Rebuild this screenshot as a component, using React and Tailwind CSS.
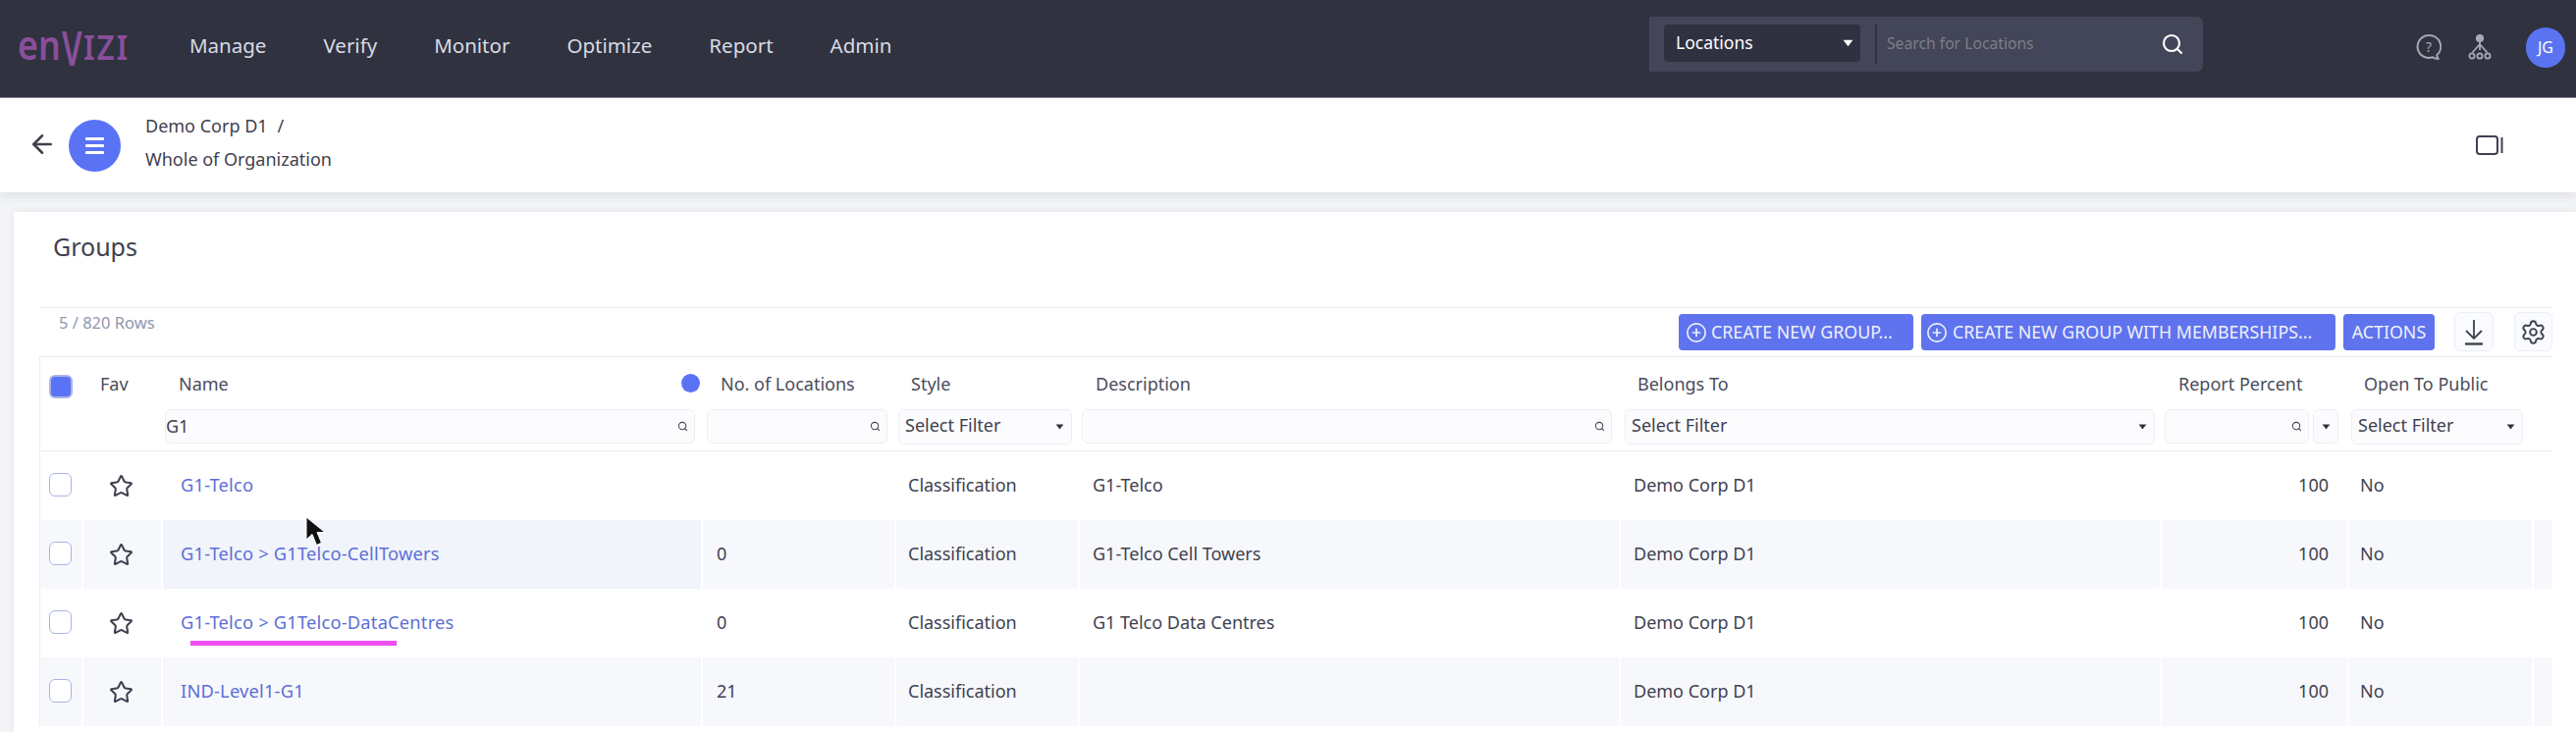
import React from "react";
import { ArrowLeft, Search, CirclePlus, Star, Settings } from "lucide-react";

const GRID = "grid grid-cols-[42px_81px_550px_197px_187px_551px_551px_191px_188px_22px]";

function Caret({ className = "" }) {
  return (
    <svg viewBox="0 0 10 7" className={"w-[9px] h-[6px] " + className}>
      <path d="M0.5 0.5H9.5L5 6.5Z" fill="currentColor" />
    </svg>
  );
}

function SearchFilter({ value = "", className = "" }) {
  return (
    <div className={"h-[35px] rounded-[6px] border border-[#eceef5] bg-[#fcfcfe] flex items-center justify-between pr-[6px] " + className}>
      <span className="text-[#3f4150] text-[18px] leading-[24px] -mt-[2px]">{value}</span>
      <Search size={11} strokeWidth={2.2} className="text-[#3f4150]" />
    </div>
  );
}

function SelectFilter({ className = "" }) {
  return (
    <div className={"h-[36px] rounded-[6px] border border-[#eceef5] bg-[#fcfcfe] flex items-center justify-between pl-[6px] pr-[7px] " + className}>
      <span className="text-[#3f4150] text-[18px] leading-[24px] -mt-[5px]">Select Filter</span>
      <Caret className="text-[#303240]" />
    </div>
  );
}

function HeadCell({ label, children, pad = "pl-0" }) {
  return (
    <div className="flex flex-col">
      <div className={"h-[53px] pt-[1px] flex items-center text-[18px] text-[#4a4c5c] " + pad}>{label}</div>
      {children}
    </div>
  );
}

function Box() {
  return <div className="w-[23px] h-[24px] rounded-[6px] border border-[#a9b4e6] bg-white" />;
}

const rows = [
  { name: "G1-Telco", count: "", desc: "G1-Telco", alt: false },
  { name: "G1-Telco > G1Telco-CellTowers", count: "0", desc: "G1-Telco Cell Towers", alt: true, hover: true },
  { name: "G1-Telco > G1Telco-DataCentres", count: "0", desc: "G1 Telco Data Centres", alt: false, mark: true },
  { name: "IND-Level1-G1", count: "21", desc: "", alt: true },
];

function Row({ r }) {
  const bg = r.alt ? "bg-[#f7f8fc] *:border-white" : "bg-white *:border-transparent";
  const text = "flex items-center text-[18px] text-[#3f4150] pb-[2px]";
  return (
    <div className={GRID + " h-[70px] *:border-l-2 *:first:border-l-0 " + bg}>
      <div className="flex items-center pl-[9px] pb-[2px]"><Box /></div>
      <div className="flex items-center pl-[26px]">
        <Star size={25} strokeWidth={2} className="text-[#3f4150]" />
      </div>
      <div className={"relative flex items-center pl-[18px] pb-[2px] text-[18.3px] tracking-[0.2px] text-[#5c6fd6] " + (r.hover ? "bg-[#f1f4fb]" : "")}>
        {r.name}
        {r.mark && <div className="absolute left-[28px] top-[53px] w-[210px] h-[5px] bg-[#ee4ff0]" />}
      </div>
      <div className={text + " pl-[14px]"}>{r.count}</div>
      <div className={text + " pl-[12px]"}>Classification</div>
      <div className={text + " pl-[13px]"}>{r.desc}</div>
      <div className={text + " pl-[13px]"}>Demo Corp D1</div>
      <div className={text + " justify-end pr-[19px]"}>100</div>
      <div className={text + " pl-[11px]"}>No</div>
      <div />
    </div>
  );
}

export default function App() {
  return (
    <div className="w-[2624px] h-[746px] overflow-hidden relative bg-[#f3f4f7] font-['Noto_Sans',sans-serif] text-[#3f4150]">
      {/* top bar */}
      <header className="h-[100px] bg-[#303240] border-b border-[#8a8b96] flex items-center">
        <div className="w-[150px] pl-[18px] flex items-center h-[40px] text-[#8a4f9c] leading-none font-semibold">
          <span className="inline-block text-[42px] w-[45px] origin-left scale-x-[0.85] -mt-[9px]">en</span>
          <span className="inline-block text-[48px] w-[22px] origin-left scale-x-[0.68] -mt-[2px]">V</span>
          <span className="inline-block text-[35px] tracking-[2px] w-[40px] origin-left scale-x-[0.9] -mt-[5px]">IZI</span>
        </div>
        <nav className="ml-[43px] flex items-center gap-[58px] text-[20.5px] text-[#d9dbe3] -mt-[7px]">
          <span>Manage</span><span>Verify</span><span>Monitor</span><span>Optimize</span><span>Report</span><span>Admin</span>
        </nav>
        <div className="ml-auto w-[564px] h-[56px] mb-[10px] rounded-r-[6px] bg-[#434558] flex items-center pl-[15px] pr-[19px]">
          <div className="w-[200px] h-[38px] -mt-[2px] rounded-[4px] bg-[#2f3140] flex items-center justify-between pl-[12px] pr-[7px] text-white text-[17.5px]">
            <span>Locations</span><Caret className="w-[11px] h-[8px] text-white" />
          </div>
          <div className="ml-[15px] w-[2px] h-[40px] bg-[#2f3140]" />
          <span className="ml-[10px] text-[15.7px] text-[#7d7e8a]">Search for Locations</span>
          <Search size={24} strokeWidth={2.2} className="ml-auto text-white" />
        </div>
        <div className="ml-[217px] flex items-center mb-[3px] pr-[11px]">
          <svg viewBox="0 0 26 28" className="w-[26px] h-[28px] text-[#a6a9b6]" fill="none" stroke="currentColor" strokeWidth="2">
            <path d="M13 2a11.5 11.5 0 1 0 4 22.3c1.5 1.2 3.5 1.7 5.5 1.4-.8-1-1.2-2.2-1.2-3.6A11.5 11.5 0 0 0 13 2Z" />
            <text x="13" y="18.5" textAnchor="middle" fontSize="14" fill="currentColor" stroke="none">?</text>
          </svg>
          <svg viewBox="0 0 24 26" className="ml-[27px] w-[24px] h-[26px] text-[#a6a9b6]" fill="none" stroke="currentColor" strokeWidth="1.8">
            <circle cx="12" cy="4" r="3.2" fill="currentColor" />
            <path d="M12 7v9M12 10 4.5 18.5M12 10l7.5 8.5" />
            <circle cx="4" cy="22" r="2.6" /><circle cx="12" cy="22" r="2.6" /><circle cx="20" cy="22" r="2.6" />
          </svg>
          <div className="ml-[35px] w-[40px] h-[41px] rounded-full bg-[#5a73f0] text-white text-[16px] flex items-center justify-center">JG</div>
        </div>
      </header>

      {/* breadcrumb bar */}
      <div className="h-[96px] bg-white shadow-[0_4px_10px_rgba(40,45,70,0.10)] relative flex items-center pl-[28px] pr-[74px]">
        <ArrowLeft size={30} strokeWidth={2} className="text-[#3f4150] -mt-[2px]" />
        <div className="ml-[12px] w-[53px] h-[53px] rounded-full bg-[#5a73f5] flex flex-col items-center justify-center gap-[4px]">
          <span className="block w-[19px] h-[3px] rounded-[1px] bg-white" />
          <span className="block w-[19px] h-[3px] rounded-[1px] bg-white" />
          <span className="block w-[19px] h-[3px] rounded-[1px] bg-white" />
        </div>
        <div className="ml-[25px] text-[18px] text-[#3f4150] flex flex-col gap-[12px] -mt-[6px]">
          <span className="leading-[22px]">Demo Corp D1<span className="ml-[10px]">/</span></span>
          <span className="leading-[22px]">Whole of Organization</span>
        </div>
        <svg viewBox="0 0 28 20" className="ml-auto w-[28px] h-[20px] text-[#3f4150]" fill="none" stroke="currentColor" strokeWidth="2">
          <rect x="1" y="1" width="21" height="18" rx="3" />
          <path d="M26.5 2v16" />
        </svg>
      </div>

      {/* card */}
      <main className="mt-[20px] ml-[14px] bg-white h-[530px] shadow-[0_0_8px_rgba(40,45,70,0.08)] pl-[26px] pr-[24px]">
        <h1 className="pl-[14px] h-[98px] pt-[16px] text-[25px] leading-[38px] font-normal text-[#3f4150] border-b border-[#e9ebf4]">Groups</h1>
        <div className="h-[49px] flex items-start justify-between">
          <span className="pl-[20px] pt-[5px] text-[16.5px] leading-[20px] text-[#8f97b0]">5 / 820 Rows</span>
          <div className="flex items-start">
            <button className="mt-[6px] w-[239px] h-[37px] rounded-[4px] bg-[#5f73ee] text-[#eef0fb] text-[17.8px] leading-none flex items-center pl-[7px] gap-[4px] whitespace-nowrap">
              <CirclePlus size={22} strokeWidth={1.8} />CREATE NEW GROUP...
            </button>
            <button className="mt-[6px] ml-[8px] w-[422px] h-[37px] rounded-[4px] bg-[#5f73ee] text-[#eef0fb] text-[17.8px] leading-none flex items-center pl-[5px] gap-[5px] whitespace-nowrap">
              <CirclePlus size={22} strokeWidth={1.8} />CREATE NEW GROUP WITH MEMBERSHIPS...
            </button>
            <button className="mt-[6px] ml-[8px] w-[93px] h-[37px] rounded-[4px] bg-[#5f73ee] text-[#eef0fb] text-[17.8px] leading-none flex items-center justify-center">ACTIONS</button>
            <button className="mt-[4px] ml-[20px] w-[40px] h-[40px] rounded-[6px] border border-[#eceef5] bg-[#fafbfe] flex items-center justify-center">
              <svg viewBox="0 0 24 28" className="w-[24px] h-[28px] text-[#3f4150]" fill="none" stroke="currentColor" strokeWidth="1.8">
                <path d="M12 2v19M4 13l8 8 8-8" /><path d="M3 26.5h18" strokeWidth="2.4" />
              </svg>
            </button>
            <button className="mt-[4px] ml-[21px] w-[39px] h-[40px] rounded-[6px] border border-[#eceef5] bg-[#fafbfe] flex items-center justify-center">
              <Settings size={27} strokeWidth={1.7} className="text-[#3f4150]" />
            </button>
          </div>
        </div>

        {/* table */}
        <div className="border-l border-[#eceef5]">
          <div className={GRID + " h-[97px] border-t border-b border-[#e9ebf4] bg-white"}>
            <div className="flex items-start pl-[9px] pt-[18px]">
              <div className="w-[24px] h-[24px] rounded-[6px] border-2 border-[#a9b4e6] bg-[#5a73f5]" />
            </div>
            <HeadCell label="Fav" pad="pl-[19px]" />
            <div className="flex flex-col">
              <div className="h-[53px] pt-[1px] flex items-center justify-between pl-[18px] pr-[1px] text-[18px] text-[#4a4c5c]">
                <span>Name</span>
                <span className="w-[19px] h-[19px] rounded-full bg-[#5a73f5] -mt-[2px]" />
              </div>
              <SearchFilter value="G1" className="ml-[4px] mr-[6px]" />
            </div>
            <HeadCell label="No. of Locations" pad="pl-[20px]"><SearchFilter className="ml-[6px] mr-[7px]" /></HeadCell>
            <HeadCell label="Style" pad="pl-[17px]"><SelectFilter className="ml-[4px] mr-[6px]" /></HeadCell>
            <HeadCell label="Description" pad="pl-[18px]"><SearchFilter className="ml-[4px] mr-[7px]" /></HeadCell>
            <HeadCell label="Belongs To" pad="pl-[19px]"><SelectFilter className="ml-[6px] mr-[5px]" /></HeadCell>
            <div className="flex flex-col">
              <div className="h-[53px] pt-[1px] flex items-center pl-[19px] text-[18px] text-[#4a4c5c] whitespace-nowrap">Report Percent</div>
              <div className="flex ml-[5px] gap-[4px]">
                <SearchFilter className="w-[147px]" />
                <div className="w-[26px] h-[35px] rounded-[6px] border border-[#eceef5] bg-[#fcfcfe] flex items-center justify-center">
                  <Caret className="text-[#303240]" />
                </div>
              </div>
            </div>
            <HeadCell label="Open To Public" pad="pl-[17px]"><SelectFilter className="ml-[4px] w-[175px]" /></HeadCell>
            <div />
          </div>
          {rows.map((r) => <Row key={r.name} r={r} />)}
        </div>
      </main>

      {/* mouse pointer over the table */}
      <svg viewBox="0 0 22 32" className="absolute left-[311px] top-[526px] w-[22px] h-[32px]">
        <path d="M1 1v23l6-5.5 4.5 11 5-2.2-4.5-10.8H20Z" fill="#111" stroke="#fff" strokeWidth="1" />
      </svg>
    </div>
  );
}
